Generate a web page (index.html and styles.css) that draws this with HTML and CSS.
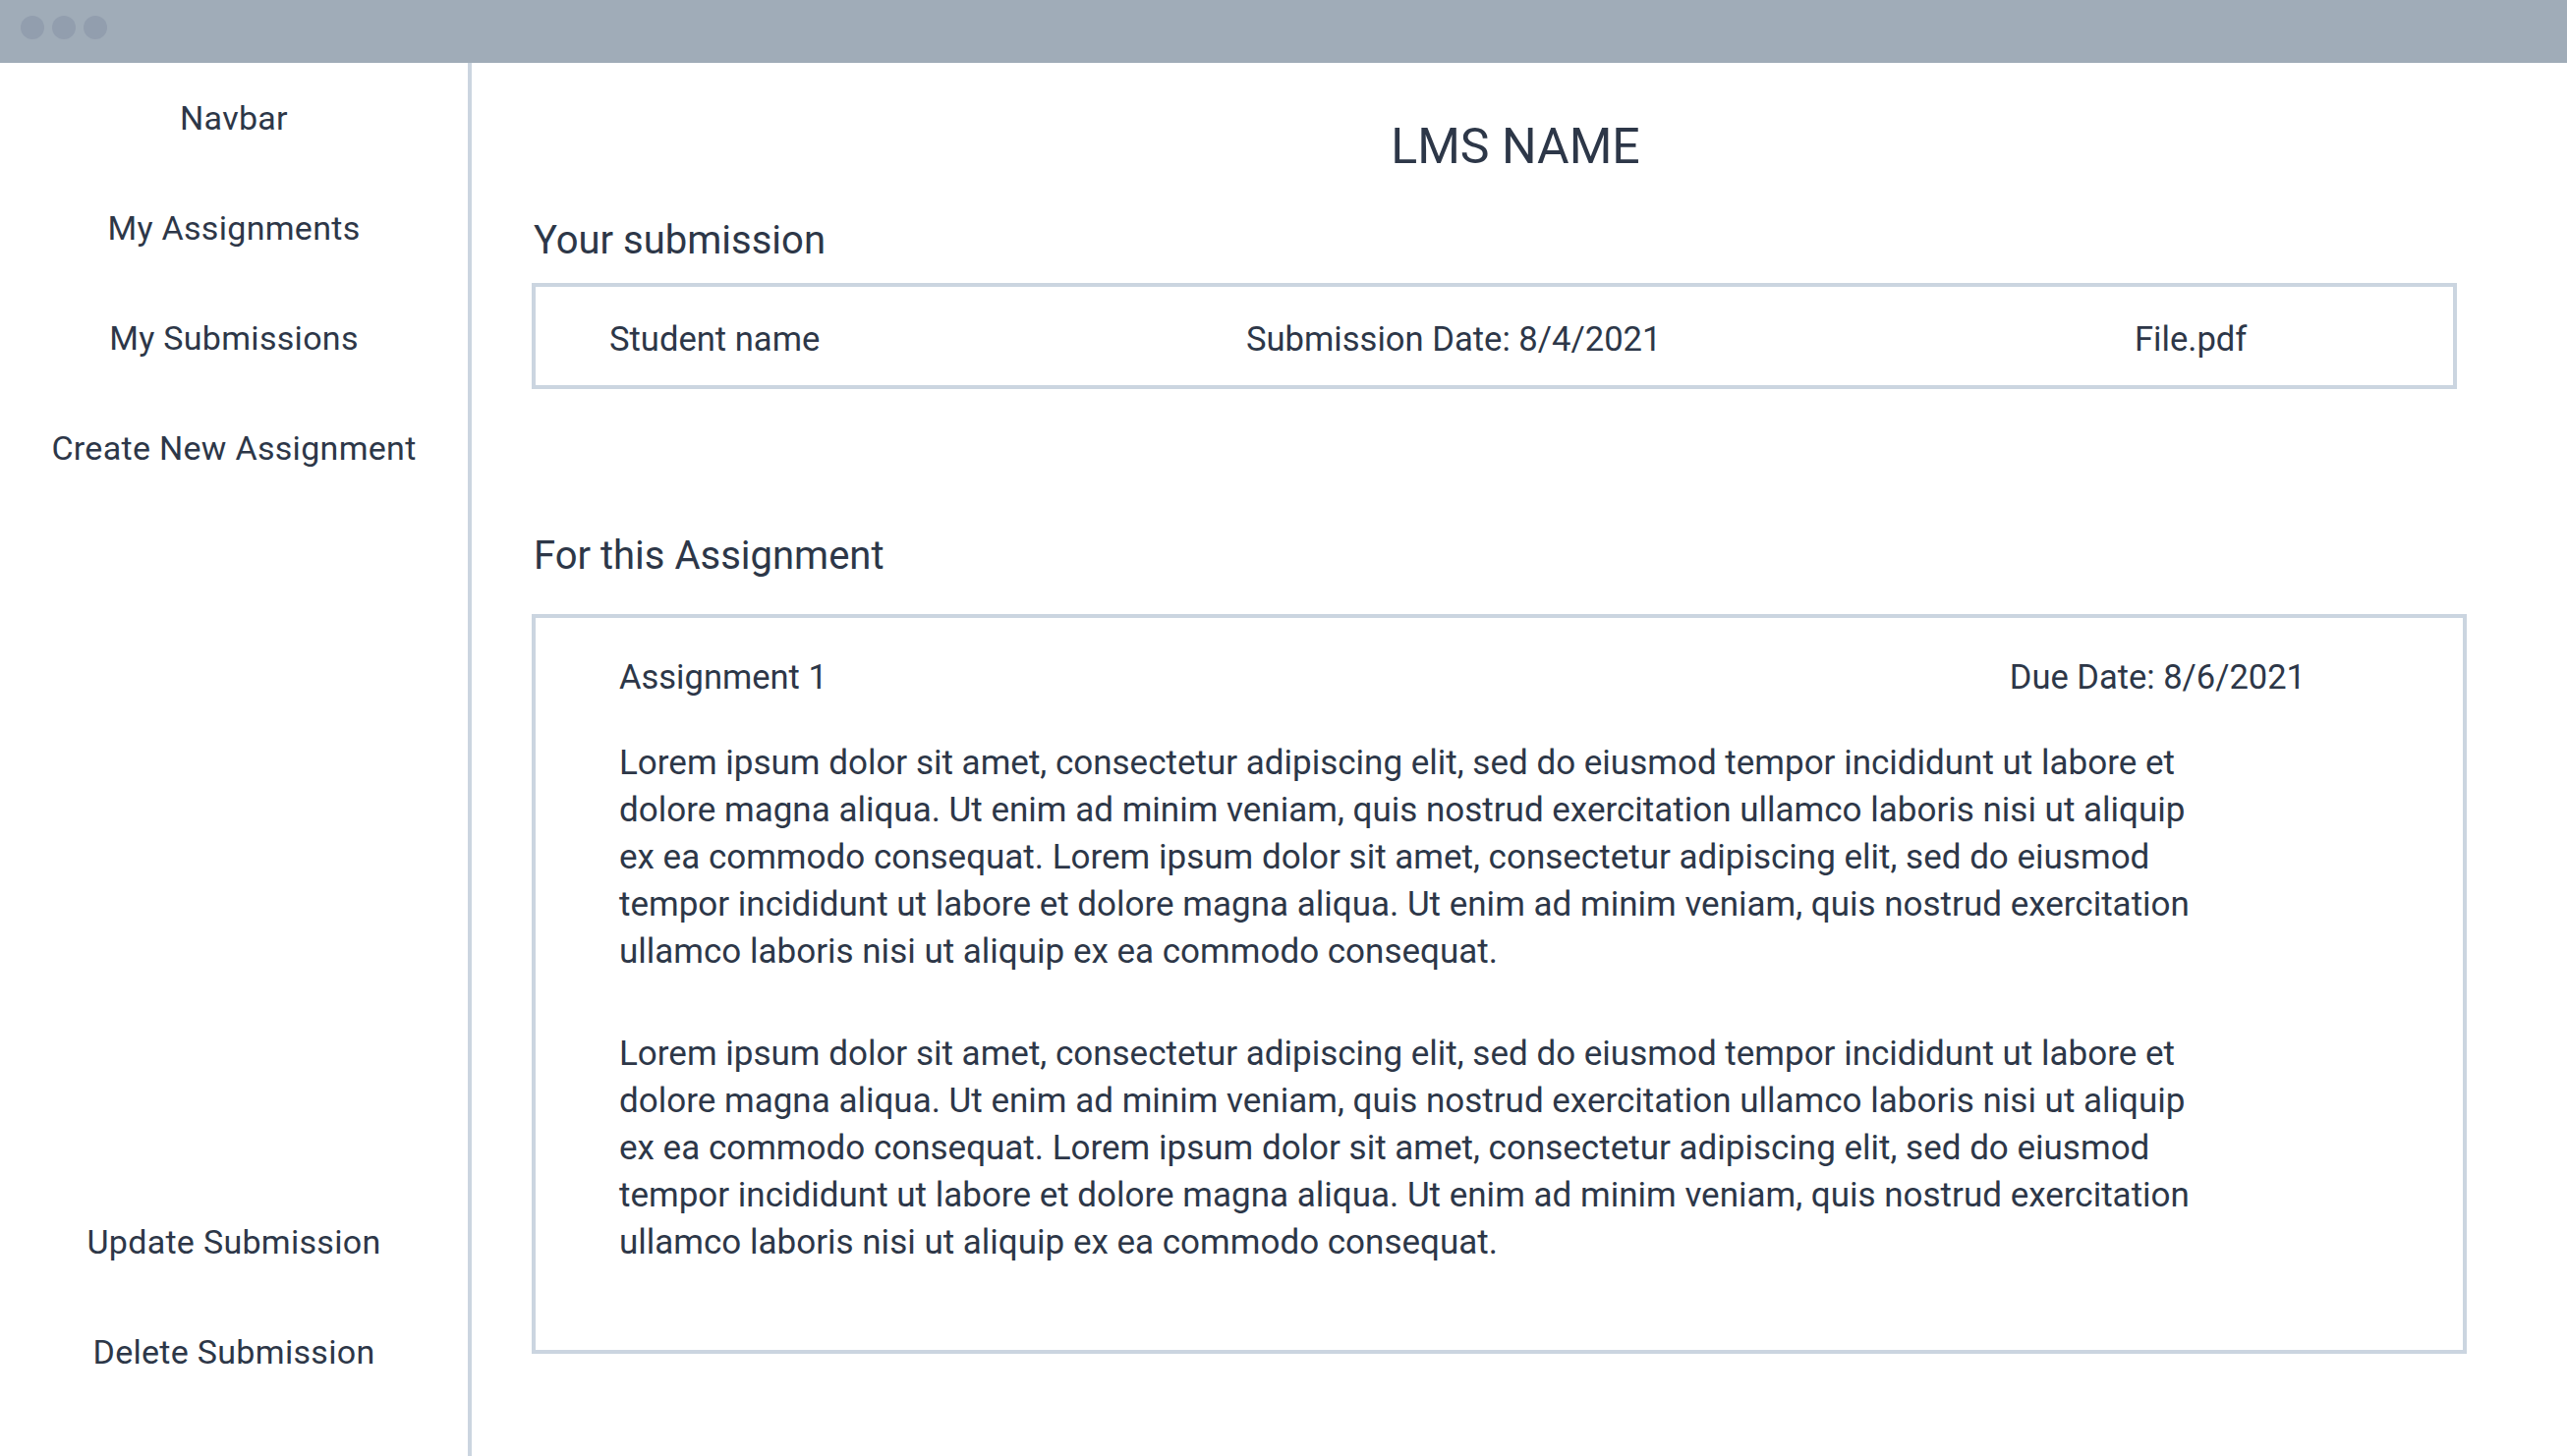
FILE: index.html
```html
<!DOCTYPE html>
<html>
<head>
<meta charset="utf-8">
<link rel="stylesheet" href="styles.css">
</head>
<body>
<div class="window">
  <div class="titlebar">
    <span class="dot"></span><span class="dot"></span><span class="dot"></span>
  </div>
  <div class="app">
    <nav class="sidebar">
      <div class="nav-group">
        <div class="nav-item">Navbar</div>
        <div class="nav-item">My Assignments</div>
        <div class="nav-item">My Submissions</div>
        <div class="nav-item">Create New Assignment</div>
      </div>
      <div class="nav-group">
        <div class="nav-item">Update Submission</div>
        <div class="nav-item">Delete Submission</div>
      </div>
    </nav>
    <main class="main">
      <h1 class="title">LMS NAME</h1>
      <h2 class="section-title">Your submission</h2>
      <div class="submission-box">
        <span class="sub-name">Student name</span>
        <span class="sub-date">Submission Date: 8/4/2021</span>
        <span class="sub-file">File.pdf</span>
      </div>
      <h2 class="section-title section-gap">For this Assignment</h2>
      <div class="assignment-box">
        <div class="assignment-head">
          <span>Assignment 1</span>
          <span>Due Date: 8/6/2021</span>
        </div>
        <p class="para">Lorem ipsum dolor sit amet, consectetur adipiscing elit, sed do eiusmod tempor incididunt ut labore et<br>dolore magna aliqua. Ut enim ad minim veniam, quis nostrud exercitation ullamco laboris nisi ut aliquip<br>ex ea commodo consequat. Lorem ipsum dolor sit amet, consectetur adipiscing elit, sed do eiusmod<br>tempor incididunt ut labore et dolore magna aliqua. Ut enim ad minim veniam, quis nostrud exercitation<br>ullamco laboris nisi ut aliquip ex ea commodo consequat.</p>
        <p class="para para-2">Lorem ipsum dolor sit amet, consectetur adipiscing elit, sed do eiusmod tempor incididunt ut labore et<br>dolore magna aliqua. Ut enim ad minim veniam, quis nostrud exercitation ullamco laboris nisi ut aliquip<br>ex ea commodo consequat. Lorem ipsum dolor sit amet, consectetur adipiscing elit, sed do eiusmod<br>tempor incididunt ut labore et dolore magna aliqua. Ut enim ad minim veniam, quis nostrud exercitation<br>ullamco laboris nisi ut aliquip ex ea commodo consequat.</p>
      </div>
    </main>
  </div>
</div>
</body>
</html>
```

FILE: styles.css
```css
* { box-sizing: border-box; }
html, body {
  margin: 0;
  padding: 0;
  background: #ffffff;
}
body {
  font-family: Roboto, "Liberation Sans", sans-serif;
  color: #2d3748;
}
.window {
  width: 2612px;
  height: 1482px;
  display: flex;
  flex-direction: column;
  overflow: hidden;
}
.titlebar {
  height: 64px;
  flex: none;
  background: #a0acb8;
  display: flex;
  align-items: flex-start;
  gap: 8px;
  padding: 16px 0 0 21px;
}
.dot {
  width: 24px;
  height: 24px;
  border-radius: 50%;
  background: #929eae;
}
.app {
  flex: 1;
  display: flex;
  min-height: 0;
}
.sidebar {
  width: 480px;
  flex: none;
  border-right: 4px solid #cbd5e0;
  display: flex;
  flex-direction: column;
  justify-content: space-between;
  padding-bottom: 50px;
}
.nav-item {
  height: 112px;
  line-height: 112px;
  text-align: center;
  font-size: 34px;
  letter-spacing: 0.3px;
}
.main {
  flex: 1;
  padding: 45px 0 0 61px;
}
.title {
  margin: 0;
  font-size: 50px;
  font-weight: 400;
  line-height: 80px;
  text-align: center;
  padding-right: 69px;
}
.section-title {
  margin: 26px 0 13px 2px;
  font-size: 40px;
  font-weight: 400;
  line-height: 60px;
}
.section-gap {
  margin-top: 140px;
  margin-bottom: 29px;
}
.submission-box {
  width: 1959px;
  height: 108px;
  border: 4px solid #cbd5e0;
  display: grid;
  grid-template-columns: 648px 904px auto;
  align-items: center;
  padding: 5px 0 0 75px;
  font-size: 34.6px;
}
.assignment-box {
  width: 1969px;
  height: 753px;
  border: 4px solid #cbd5e0;
  padding: 36px 160px 0 85px;
}
.assignment-head {
  display: flex;
  justify-content: space-between;
  font-size: 34.5px;
  line-height: 48px;
}
.para {
  margin: 40px 0 0 0;
  font-size: 35px;
  line-height: 48px;
  white-space: nowrap;
}
.para-2 {
  margin-top: 56px;
}
```
